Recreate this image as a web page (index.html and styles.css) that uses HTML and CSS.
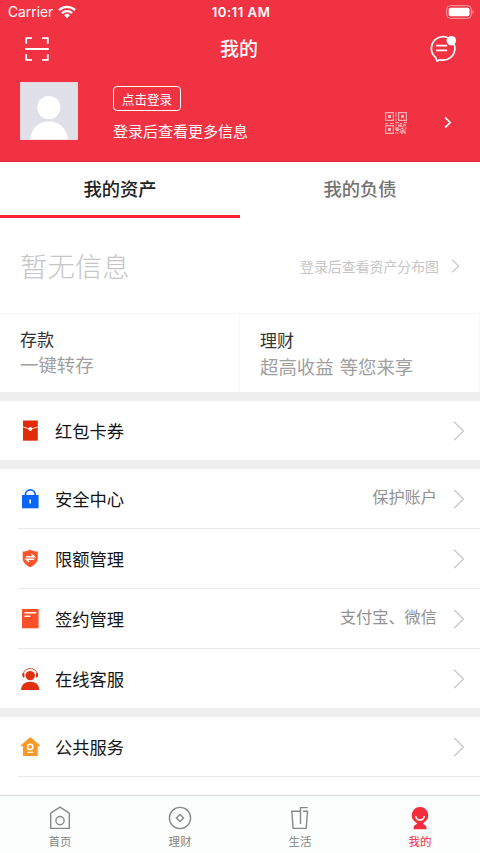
FILE: index.html
```html
<!DOCTYPE html>
<html lang="zh-CN">
<head>
<meta charset="utf-8">
<title>我的</title>
<link rel="stylesheet" href="styles.css">
</head>
<body>
<div class="app">
  <header class="header">
    <div class="status">
      <div class="carrier"><span>Carrier</span>
        <svg width="18" height="14" viewBox="0 0 18 14" fill="none" stroke="#fff" stroke-width="2.3"><path d="M1 5.1a11.4 11.4 0 0 1 16 0"/><path d="M3.900 8.300a7.300 7.300 0 0 1 10.200 0"/><path d="M9 13.200 6.100 10.200a4.200 4.200 0 0 1 5.800 0z" fill="#fff" stroke="none"/></svg>
      </div>
      <div class="time">10:11 AM</div>
      <svg class="battery" width="28" height="14" viewBox="0 0 28 14"><rect x=".7" y=".7" width="24.6" height="12.6" rx="3.5" fill="none" stroke="#fff" stroke-opacity=".55"/><rect x="2.7" y="2.7" width="20.8" height="8.6" rx="1.8" fill="#fff"/><path d="M26.700 5v4q1.200-.6 1.200-2t-1.200-2" fill="#fff" fill-opacity=".6"/></svg>
    </div>
    <div class="nav">
      <svg width="24" height="24" viewBox="0 0 24 24" fill="none" stroke="#fff" stroke-width="1.8"><path d="M1.200 6.800V1.200h5.800M17 1.200h5.800v5.600M1.200 17.200v5.600h5.800M17 22.800h5.800v-5.600M.2 12h23.600"/></svg>
      <h1>我的</h1>
      <svg width="28" height="28" viewBox="0 0 28 28" fill="none" stroke="#fff" stroke-width="1.7"><path d="M6.500 22.300A11.700 11.700 0 1 1 11 24.700L8.200 26.100Z" stroke-linejoin="round"/><path d="M7.200 10.700h11M7.200 15.300h11"/><circle cx="22.300" cy="5.700" r="4.800" fill="#fff" stroke="none"/></svg>
    </div>
    <div class="profile">
      <svg class="avatar" width="58" height="58" viewBox="0 0 58 58"><path fill="#e0e1e8" d="M0 0h58v58H0z"/><circle cx="28.800" cy="25.500" r="11.600" fill="#fff"/><path d="M10 58c1-11 8-18.500 19-18.500S47 47 48 58z" fill="#fff"/><path d="M0 0h58v58H0z" fill="none" stroke="#f7c9d0" stroke-width="1"/></svg>
      <div class="login"><span class="login-button">点击登录</span><p>登录后查看更多信息</p></div>
      <svg class="qr" width="22" height="22" viewBox="0 0 22 22" fill="none" stroke="#fff" stroke-opacity=".6"><path d="M.6.6h7.800v7.800H.6zM13.600.6h7.800v7.800h-7.800zM.6 13.600h7.800v7.800H.6z" stroke-width="1.200"/><path d="M3 3h3v3H3zM16 3h3v3h-3zM3 16h3v3H3z" fill="#fff" fill-opacity=".65" stroke="none"/><path d="M11 0v3M10 4h2M11 6v3M0 11.500h3M5 11.500h4M10 10.500h4M15 11.500h2M19 10.500h3M10 13h2M13 14h4M18 13.500h3M10 16h4M16 16.500h2M20 16h2M11 18.500h3M15 19h4M10 21h3M16 21.300h2M20 19v3M14 12v3M18 14v3M12 15v4M16 12v3M10 17.300h6M17 18h4M14 20.200h6M18 12.200h3" stroke-width="1"/></svg>
      <svg class="profile-arrow" width="8" height="13" viewBox="0 0 8 13" fill="none" stroke="#fff" stroke-width="1.700"><path d="m1 1.300 5.200 5.200L1 11.700"/></svg>
    </div>
  </header>
  <nav class="tabs"><div class="tab active">我的资产</div><div class="tab">我的负债</div></nav>
  <section class="assets">
    <strong>暂无信息</strong>
    <div class="hint">登录后查看资产分布图<svg width="9" height="14" viewBox="0 0 9 14" fill="none" stroke="#c6c6c6" stroke-width="1.200"><path d="m1 .6 6.700 6.400L1 13.400"/></svg></div>
  </section>
  <section class="products">
    <div class="product"><h2>存款</h2><p>一键转存</p></div>
    <div class="product offset"><h2>理财</h2><p>超高收益 等您来享</p></div>
  </section>
  <section class="group">
    <div class="row"><svg class="icon" width="22" height="22" viewBox="0 0 22 22"><path fill="#e22c08" d="M4 .5h14.800v20.200H4z"/><path d="m4 6.900 7.200 2.400 7.600-2.400" fill="none" stroke="#ffd9cf" stroke-width="1"/><circle cx="11.300" cy="9" r="1.900" fill="#fff"/></svg><span>红包卡券</span><svg class="chevron" width="12" height="20" viewBox="0 0 12 20"><path d="m1 .8 9.500 9.200L1 19.200"/></svg></div>
  </section>
  <section class="group">
    <div class="row"><svg class="icon" width="22" height="22" viewBox="0 0 22 22"><path fill="#0867f8" d="M3 7h16.600v13.300H3z"/><path d="M6.400 8V6.700a4.900 4.900 0 0 1 9.800 0V8" fill="none" stroke="#0867f8" stroke-width="1.700"/><path d="M10.400 11.600h1.500v3.900h-1.500z" fill="#fff"/></svg><span>安全中心</span><em>保护账户</em><svg class="chevron" width="12" height="20" viewBox="0 0 12 20"><path d="m1 .8 9.500 9.200L1 19.200"/></svg></div>
    <div class="row"><svg class="icon" width="22" height="22" viewBox="0 0 22 22"><path fill="#fb5429" d="M11 1.400c2.500 1.400 4.900 2 7.800 2v6.500c0 4.300-3.200 7.100-7.700 9.300C6.900 17 3.700 14.200 3.700 9.900V3.400c2.600 0 5-.6 7.300-2z"/><path d="M7 8.800h8.300L12.200 6M15.300 11.200H7l3.100 2.700" fill="none" stroke="#fff" stroke-width="1.400"/></svg><span>限额管理</span><svg class="chevron" width="12" height="20" viewBox="0 0 12 20"><path d="m1 .8 9.500 9.200L1 19.200"/></svg></div>
    <div class="row"><svg class="icon" width="22" height="22" viewBox="0 0 22 22"><path fill="#fb5129" d="M3 1h16.600v19.300H3z"/><path d="M5.500 4.700h11.700M5.500 8.200h5.800" stroke="#fff" stroke-width="1.400"/></svg><span>签约管理</span><em>支付宝、微信</em><svg class="chevron" width="12" height="20" viewBox="0 0 12 20"><path d="m1 .8 9.500 9.200L1 19.200"/></svg></div>
    <div class="row"><svg class="icon" width="22" height="22" viewBox="0 0 22 22"><circle cx="11.200" cy="7.600" r="4.700" fill="#df310d"/><path d="M4.100 7.500C4.200 2.800 7.200.6 11.200.6s7 2.200 7.100 6.900" fill="none" stroke="#df310d" stroke-width=".9"/><path d="M3.400 5.300h2v4.200h-1q-1.700-1-1-4.200zM19 5.300h-2v4.200h1q1.700-1 1-4.200z" fill="#df310d"/><path d="M2 22c.2-5.400 4-8.300 9.200-8.300s9 2.900 9.200 8.300z" fill="#df310d"/></svg><span>在线客服</span><svg class="chevron" width="12" height="20" viewBox="0 0 12 20"><path d="m1 .8 9.500 9.200L1 19.200"/></svg></div>
  </section>
  <section class="group last">
    <div class="row"><svg class="icon" width="22" height="22" viewBox="0 0 22 22"><path fill="#fb9926" d="m11.300 1 9.700 8.300-.5 1h-1.700v9.800H4v-9.800H1.800v-1z"/><circle cx="11.200" cy="10.900" r="2.600" fill="none" stroke="#fff" stroke-width="1.500"/><path d="M8.300 16.300h5.800" stroke="#fff" stroke-width="1.200"/></svg><span>公共服务</span><svg class="chevron" width="12" height="20" viewBox="0 0 12 20"><path d="m1 .8 9.500 9.200L1 19.200"/></svg></div>
  </section>
  <footer class="tabbar">
    <div class="item"><svg width="24" height="24" viewBox="0 0 24 24"><path d="M2.700 7.200 12 1.200l9.300 6v15.200H2.700z"/><circle cx="12" cy="14.600" r="4.100"/></svg><span>首页</span></div>
    <div class="item"><svg width="24" height="24" viewBox="0 0 24 24"><circle cx="12" cy="12" r="10.600"/><path d="m12 8.400 3.600 3.600-3.600 3.600L8.400 12z"/></svg><span>理财</span></div>
    <div class="item"><svg width="24" height="24" viewBox="0 0 24 24"><path d="M12.500 5.300H3.800l1.300 17.100h13.100L19.500 5.300H15M12.500 18V1.600h7.200"/></svg><span>生活</span></div>
    <div class="item current"><svg width="24" height="24" viewBox="0 0 24 24"><path class="solid" d="M12 1a8.200 8.200 0 0 1 5 14.700l-2 1.500q.3 1 1.900 1.700 1.500.7 1.500 2.200v2.200H5.600v-2.200q0-1.500 1.500-2.200 1.600-.7 1.900-1.700l-2-1.500A8.200 8.200 0 0 1 12 1z"/><path class="smile" d="M7.700 10q.4 4 4.300 4t4.300-4"/></svg><span>我的</span></div>
  </footer>
</div>
</body>
</html>
```
FILE: styles.css
```css
* { box-sizing: border-box; margin: 0; padding: 0; }
body { background: #fff; font-family: "Noto Sans CJK SC", sans-serif; }
svg { display: block; flex: none; }
.app { width: 480px; height: 853px; overflow: hidden; display: flex; flex-direction: column; background: #fff; }
.header { height: 162px; flex: none; background: #f13242; color: #fff; border-bottom: 1px solid #e82a3b; }
.status { height: 24px; display: grid; grid-template-columns: 1fr auto 1fr; align-items: center; padding: 0 6px 0 8px; font-family: Inter, sans-serif; }
.carrier { display: flex; align-items: center; gap: 5px; }
.carrier span { font-size: 13.8px; }
.time { font-weight: 600; font-size: 13.2px; letter-spacing: .5px; }
.battery { justify-self: end; }
.nav { height: 50px; display: flex; align-items: center; justify-content: space-between; padding: 0 23px 0 25px; }
.nav h1 { font-size: 19px; font-weight: 500; line-height: 28px; transform: translateY(-1px); }
.profile { height: 88px; padding: 8px 28px 0 20px; display: flex; align-items: flex-start; }
.login { margin-left: 35px; padding-top: 4px; }
.login-button { display: block; width: 68px; height: 25px; border: 1px solid #fff; border-radius: 4px; font-size: 12.6px; line-height: 23px; text-align: center; }
.login p { font-size: 15px; line-height: 22px; margin-top: 9px; white-space: nowrap; }
.qr { margin: 30px 0 0 auto; }
.profile-arrow { margin: 34px 0 0 37px; }
.tabs { height: 56px; flex: none; display: flex; }
.tab { flex: 1; text-align: center; font-size: 18.3px; font-weight: 500; line-height: 52px; color: #737373; border-bottom: 3px solid transparent; }
.tab.active { color: #222; border-color: #fb2438; }
.assets { height: 95px; flex: none; display: flex; align-items: center; justify-content: space-between; padding: 0 20px; }
.assets strong { font-size: 27.4px; font-weight: 300; line-height: 40px; color: #c6c6c6; transform: translateY(-1px); }
.hint { display: flex; align-items: center; gap: 12px; font-size: 13.9px; color: #c5c5c5; }
.products { height: 79px; flex: none; display: flex; border-top: 1px solid #f5f5f5; }
.product { flex: 1; padding: 12px 20px 0; border-right: 1px solid #f7f7f7; }
.product h2 { font-size: 17px; font-weight: 400; line-height: 25px; color: #333; }
.product p { font-size: 18.400px; font-weight: 400; line-height: 25px; color: #a0a0a0; white-space: nowrap; word-spacing: 2px; margin-top: 1px; }
.product.offset { padding-top: 13px; }
.product.offset p { margin-top: 2px; }
.group { flex: none; border-top: 9px solid #eee; }
.row { height: 60px; margin-left: 18px; padding: 0 15px 0 1px; display: flex; align-items: center; border-bottom: 1px solid #ebebeb; }
.row:last-child { height: 59px; border-bottom: 0; }
.last .row:last-child { border-bottom: 1px solid #ebebeb; height: 60px; }
.row span { margin-left: 14px; font-size: 17.3px; line-height: 26px; color: #151515; }
.row em { margin-left: auto; font-style: normal; font-size: 16.2px; line-height: 24px; color: #929292; transform: translateY(-3px); }
.chevron { margin-left: auto; fill: none; stroke: #c8c8c8; stroke-width: 1.300; }
.row em + .chevron { margin-left: 16px; }
.tabbar { height: 58px; flex: none; margin-top: auto; border-top: 1px solid #dedede; background: #fcfefd; display: flex; }
.item { flex: 1; display: flex; flex-direction: column; align-items: center; padding-top: 10px; color: #858585; }
.item svg { fill: none; stroke: #888; stroke-width: 1.400; }
.item span { font-size: 11.5px; line-height: 16px; margin-top: 3px; }
.item.current { color: #f32d3d; }
.item .solid { fill: #f32d3d; stroke: none; }
.item .smile { stroke: #fff; stroke-width: 1.500; }
```
